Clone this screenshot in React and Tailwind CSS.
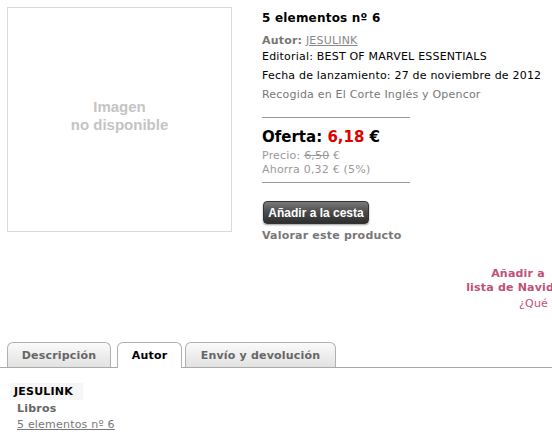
export default function App() {
  const v = { fontFamily: '"DejaVu Sans", Verdana, sans-serif' };
  const a = { fontFamily: '"Liberation Sans", Arial, sans-serif' };
  return (
    <div className="relative w-[552px] h-[446px] overflow-hidden bg-white text-[11px] tracking-[0.2px] text-black" style={v}>
      <div className="flex pt-[7px] pl-[7px]">
        <div className="w-[225px] h-[225px] pb-[8px] border border-[#d9d9d9] flex flex-col items-center justify-center text-[#c4c4c4] text-[15px] tracking-normal leading-[18px] font-bold" style={a}>
          <span>Imagen</span>
          <span>no disponible</span>
        </div>
        <div className="ml-[30px] flex flex-col">
          <div className="mt-[3px] text-[12px] font-bold leading-[16px]">5 elementos nº 6</div>
          <div className="mt-[7px] leading-[16px]">
            <span className="font-bold text-[#777]">Autor:</span>{' '}
            <span className="text-[#888] underline">JESULINK </span>
          </div>
          <div className="leading-[16px]">Editorial: BEST OF MARVEL ESSENTIALS</div>
          <div className="mt-[3px] leading-[16px]">Fecha de lanzamiento: 27 de noviembre de 2012</div>
          <div className="mt-[3px] leading-[16px] text-[#777]">Recogida en El Corte Inglés y Opencor</div>
          <div className="mt-[14px] w-[148px] h-px bg-[#999]"></div>
          <div className="mt-[10px] text-[15px] font-bold leading-[19px] tracking-normal">
            Oferta: <span className="text-[#e00000]">6,18</span> €
          </div>
          <div className="mt-px leading-[15px] text-[#999]">
            Precio: <span className="line-through">6,50</span> €
          </div>
          <div className="leading-[14px] text-[#999]">Ahorra 0,32 € (5%)</div>
          <div className="mt-[5px] w-[148px] h-px bg-[#999]"></div>
          <div className="mt-[18px] ml-px w-[106px] h-[23px] rounded-[4px] bg-gradient-to-b from-[#7a7a7a] via-[#4a4a4a] to-[#2e2e2e] border border-[#333] shadow-[0_1px_2px_rgba(0,0,0,0.4)] flex items-center justify-center text-white text-[12px] tracking-normal font-bold" style={a}>
            Añadir a la cesta
          </div>
          <div className="mt-[4px] leading-[16px] font-bold text-[#777]">Valorar este producto</div>
        </div>
      </div>
      <div className="mt-[23px] ml-[466px] w-[104px] flex flex-col text-[#c0507a] leading-[14px] whitespace-nowrap">
        <span className="font-bold text-center">Añadir a</span>
        <span className="font-bold text-center">lista de Navidad</span>
        <span className="mt-[2px] ml-[53px]">¿Qué es?</span>
      </div>
      <div className="mt-[31px] flex items-end pl-[7px] border-b border-[#aaa] h-[26px]">
        <div className="w-[104px] h-[25px] pt-[2px] mr-[6px] rounded-t-[6px] border border-b-0 border-[#b0b0b0] bg-gradient-to-b from-[#fafafa] to-[#e2e2e2] flex items-center justify-center font-bold text-[#666]">Descripción</div>
        <div className="w-[65px] h-[26px] pt-[2px] -mb-px mr-[3px] rounded-t-[6px] border border-b-0 border-[#b0b0b0] bg-white flex items-center justify-center font-bold text-black">Autor</div>
        <div className="w-[151px] h-[25px] pt-[2px] rounded-t-[6px] border border-b-0 border-[#b0b0b0] bg-gradient-to-b from-[#fafafa] to-[#e2e2e2] flex items-center justify-center font-bold text-[#666]">Envío y devolución</div>
      </div>
      <div className="mt-[15px] pl-[10px]">
        <div className="inline-block bg-[#f6f6f6] pl-[4px] pr-[10px] leading-[17px] font-bold">JESULINK</div>
        <div className="pl-[7px] leading-[16px] font-bold text-[#666]">Libros</div>
        <div className="pl-[7px] leading-[16px] text-[#777] underline">5 elementos nº 6</div>
      </div>
    </div>
  );
}
